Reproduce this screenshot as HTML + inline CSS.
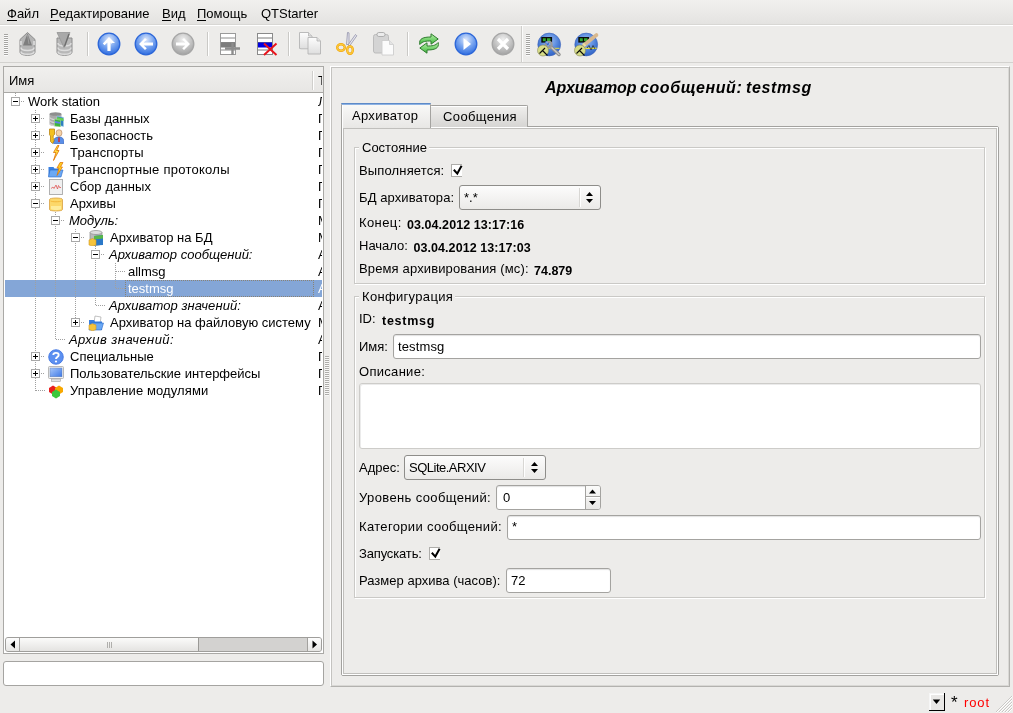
<!DOCTYPE html>
<html><head><meta charset="utf-8">
<style>
*{box-sizing:border-box}
html,body{margin:0;padding:0}
body{width:1013px;height:713px;overflow:hidden;position:relative;background:#edecea;font-family:"Liberation Sans",sans-serif;font-size:13px;line-height:15px;color:#000}
#root{position:absolute;left:0;top:0;width:1013px;height:713px;will-change:transform}
.a{position:absolute}
.t{position:absolute;white-space:nowrap;line-height:15px}
.b{font-weight:bold}
.i{font-style:italic}
u{text-decoration:none;position:relative}
u::after{content:"";position:absolute;left:0;right:0;top:14px;height:1px;background:#000}
.sepv{position:absolute;width:2px;border-left:1px solid #cac9c6;border-right:1px solid #fff}
.grip{position:absolute;width:5px;background:repeating-linear-gradient(#a5a4a1 0 1px,#fbfbfb 1px 2px)}
.exp{position:absolute;width:9px;height:9px;border:1px solid #a8a8a8;background:#fff}
.exp::before{content:"";position:absolute;left:1px;top:3px;width:5px;height:1px;background:#000}
.exp.p::after{content:"";position:absolute;left:3px;top:1px;width:1px;height:5px;background:#000}
.vl{position:absolute;width:1px;background:repeating-linear-gradient(#a0a0a0 0 1px,transparent 1px 2px)}
.hl{position:absolute;height:1px;background:repeating-linear-gradient(90deg,#a0a0a0 0 1px,transparent 1px 2px)}
.ico{position:absolute;width:16px;height:16px}
.tb{position:absolute;width:22px;height:22px;top:33px}
.inp{position:absolute;background:#fff;border:1px solid #a4a3a0;border-radius:3px;box-shadow:inset 0 1px 1px #e2e2e2}
.combo{position:absolute;background:linear-gradient(#fcfcfc,#ebeae8);border:1px solid #8e8d8a;border-radius:3px}
.chk{position:absolute;width:11px;height:13px;border:1px solid #aeadaa;border-right:none;background:#fff}

</style></head><body><div id="root">
<!-- MENU BAR -->
<div class="a" style="left:0;top:0;width:1013px;height:24px;background:linear-gradient(#f1f0ee,#e4e3e1)"></div>
<div class="a" style="left:0;top:24px;width:1013px;height:1px;background:#d8d7d4"></div>
<div class="a" style="left:0;top:25px;width:1013px;height:1px;background:#fff"></div>
<div class="t" style="left:7px;top:6px"><u>Ф</u>айл</div>
<div class="t" style="left:50px;top:6px"><u>Р</u>едактирование</div>
<div class="t" style="left:162px;top:6px"><u>В</u>ид</div>
<div class="t" style="left:197px;top:6px"><u>П</u>омощь</div>
<div class="t" style="left:261px;top:6px">QTStarter</div>
<!-- TOOLBAR -->
<div class="a" style="left:0;top:62px;width:1013px;height:1px;background:#d3d2cf"></div>
<div class="grip" style="left:4px;top:34px;height:22px;width:4px"></div>
<div class="sepv" style="left:87px;top:32px;height:24px"></div>
<div class="sepv" style="left:207px;top:32px;height:24px"></div>
<div class="sepv" style="left:288px;top:32px;height:24px"></div>
<div class="sepv" style="left:407px;top:32px;height:24px"></div>
<div class="a" style="left:521px;top:26px;width:1px;height:36px;background:#cfcecb"></div>
<div class="a" style="left:522px;top:26px;width:1px;height:36px;background:#fbfbfa"></div>
<div class="grip" style="left:526px;top:34px;height:22px;width:4px"></div>
<svg class="a" style="left:0;top:26px" width="620" height="36" viewBox="0 26 620 36">
<defs>
<linearGradient id="gdb" x1="0" x2="1" y1="0" y2="0"><stop offset="0" stop-color="#9a9a9a"/><stop offset=".4" stop-color="#d8d8d8"/><stop offset="1" stop-color="#8c8c8c"/></linearGradient>
<radialGradient id="gblue" cx=".5" cy=".3" r=".7"><stop offset="0" stop-color="#dfe9fb"/><stop offset=".5" stop-color="#7aa6f0"/><stop offset="1" stop-color="#2f6de0"/></radialGradient>
<radialGradient id="ggray" cx=".5" cy=".3" r=".7"><stop offset="0" stop-color="#f0f0f0"/><stop offset=".5" stop-color="#c8c8c8"/><stop offset="1" stop-color="#a2a2a2"/></radialGradient>
<linearGradient id="gdoc" x1="0" x2="0" y1="0" y2="1"><stop offset="0" stop-color="#fdfdfd"/><stop offset="1" stop-color="#dedede"/></linearGradient>
<radialGradient id="gglob" cx=".5" cy=".35" r=".7"><stop offset="0" stop-color="#9fc0f5"/><stop offset=".6" stop-color="#4c7fd8"/><stop offset="1" stop-color="#2a5bbf"/></radialGradient>
</defs>
<!-- icon1 db up -->
<g transform="translate(19.5,32)">
<path d="M8 0.5 L15.5 7.5 L15.5 20 C15.5 22.3 12 23.3 8 23.3 C4 23.3 0.5 22.3 0.5 20 L0.5 7.5 Z" fill="#b4b4b4" stroke="#8c8c8c" stroke-width="1"/>
<path d="M1.5 9 L1.5 13 M14.5 9 L14.5 13" stroke="#d4d4d4" stroke-width="2"/>
<path d="M1.5 15.5 C1.5 17.5 4.5 18.5 8 18.5 C11.5 18.5 14.5 17.5 14.5 15.5 M1.5 19.5 C1.5 21.5 4.5 22.3 8 22.3 C11.5 22.3 14.5 21.5 14.5 19.5" fill="none" stroke="#dedede" stroke-width="1.6"/>
<path d="M8 1.5 L12.5 13.5 L3.5 13.5 Z" fill="#7e7e7e"/>
<path d="M8 3 L9.5 12" stroke="#a0a0a0" stroke-width="1"/>
</g>
<!-- icon2 db down -->
<g transform="translate(56.5,32)">
<path d="M0.5 6 L15.5 6 L15.5 20 C15.5 22.3 12 23.3 8 23.3 C4 23.3 0.5 22.3 0.5 20 Z" fill="#b8b8b8" stroke="#8e8e8e" stroke-width="1"/>
<path d="M1.5 11 C1.5 13 4.5 14 8 14 C11.5 14 14.5 13 14.5 11 M1.5 15.5 C1.5 17.5 4.5 18.5 8 18.5 C11.5 18.5 14.5 17.5 14.5 15.5 M1.5 19.5 C1.5 21.5 4.5 22.3 8 22.3 C11.5 22.3 14.5 21.5 14.5 19.5" fill="none" stroke="#dcdcdc" stroke-width="1.5"/>
<path d="M0.5 0.5 L13.5 0.5 L7.5 15.5 Z" fill="#a9a9a9" stroke="#959595" stroke-width=".8"/>
<path d="M12.5 2 L8 14.5" stroke="#6e6e6e" stroke-width="1.4"/>
</g>
<!-- icon3 blue up -->
<g transform="translate(109,44)">
<circle r="10.8" fill="url(#gblue)" stroke="#2c66d8" stroke-width="1.3"/>
<path d="M0 -7 L6 -1 L3 -1 L3 -0 L1.6 -1.6 L1.6 7 L-1.6 7 L-1.6 -1.6 L-4.5 1.2 L-6.2 -0.6 Z" fill="#fff"/>
</g>
<!-- icon4 blue left -->
<g transform="translate(146,44)">
<circle r="10.8" fill="url(#gblue)" stroke="#2c66d8" stroke-width="1.3"/>
<path d="M-7 0 L-1 -6 L0.8 -4.3 L-2.3 -1.6 L7 -1.6 L7 1.6 L-2.3 1.6 L0.8 4.3 L-1 6 Z" fill="#fff"/>
</g>
<!-- icon5 gray right -->
<g transform="translate(183,44)">
<circle r="10.8" fill="url(#ggray)" stroke="#a6a6a6" stroke-width="1.3"/>
<path d="M7 0 L1 -6 L-0.8 -4.3 L2.3 -1.6 L-7 -1.6 L-7 1.6 L2.3 1.6 L-0.8 4.3 L1 6 Z" fill="#fff"/>
</g>
<!-- icon6 add row -->
<g transform="translate(220,33)">
<rect x=".5" y=".5" width="15" height="21" fill="#fff" stroke="#9a9a9a"/>
<path d="M1 5h14M1 9.5h14M1 17h14" stroke="#8a8a8a" stroke-width="1"/>
<rect x="1" y="9.5" width="14" height="5" fill="#7c7c7c"/>
<path d="M5 15.5h15M12.5 10v12" stroke="#8c8c8c" stroke-width="2.4"/>
</g>
<!-- icon7 delete row -->
<g transform="translate(257,33)">
<rect x=".5" y=".5" width="15" height="21" fill="#fff" stroke="#8a8a8a"/>
<path d="M1 5h14M1 9.5h14M1 17h14" stroke="#7a7a7a" stroke-width="1"/>
<rect x="1" y="9.5" width="14" height="5" fill="#0000e0"/>
<path d="M7 10.5 L19.5 22 M19.5 10.5 L7 22" stroke="#e8141c" stroke-width="2"/>
</g>
<!-- icon8 copy -->
<g transform="translate(299,32)">
<path d="M0.5 0.5 h9 l3.5 3.5 v12.5 h-12.5 z" fill="url(#gdoc)" stroke="#b4b4b4" stroke-width=".9"/>
<path d="M9.5 0.5 v3.5 h3.5" fill="#e0e0e0" stroke="#b4b4b4" stroke-width=".8"/>
<path d="M1.5 17 h12" stroke="#d0d0d0" stroke-width="1"/>
<path d="M9 5.5 h9 l3.5 3.5 v13 h-12.5 z" fill="url(#gdoc)" stroke="#b4b4b4" stroke-width=".9"/>
<path d="M18 5.5 v3.5 h3.5" fill="#e0e0e0" stroke="#b4b4b4" stroke-width=".8"/>
</g>
<!-- icon9 scissors -->
<g transform="translate(336,32)">
<path d="M10.5 12.5 L11.5 0.5 L13 0.8 L13 12.5 Z" fill="#e8e8f0" stroke="#9090a8" stroke-width=".8"/>
<path d="M12 13 L19.5 2.5 L20.8 3.8 L13.5 14 Z" fill="#e8e8f0" stroke="#9090a8" stroke-width=".8"/>
<ellipse cx="5" cy="15.5" rx="3.8" ry="3.3" fill="none" stroke="#f2a810" stroke-width="2.4"/>
<ellipse cx="14" cy="18" rx="2.8" ry="3.8" fill="none" stroke="#f2a810" stroke-width="2.4"/>
<ellipse cx="5" cy="15.5" rx="3.8" ry="3.3" fill="none" stroke="#ffd040" stroke-width="1"/>
<ellipse cx="14" cy="18" rx="2.8" ry="3.8" fill="none" stroke="#ffd040" stroke-width="1"/>
</g>
<!-- icon10 paste -->
<g transform="translate(373,32)">
<rect x="0.5" y="2.5" width="15" height="18.5" rx="2" fill="#d4d4d4" stroke="#b8b8b8" stroke-width=".9"/>
<rect x="4" y="0.5" width="8" height="4" rx="1.8" fill="#ececec" stroke="#a8a8a8" stroke-width=".9"/>
<path d="M9 8.5 h7.5 l4 4 v10.5 h-11.5 z" fill="#fbfbfb" stroke="#cdcdcd" stroke-width=".9"/>
<path d="M16.5 8.5 v4 h4" fill="#e4e4e4" stroke="#cdcdcd" stroke-width=".8"/>
</g>
<!-- icon11 refresh -->
<defs><linearGradient id="ggr" x1="0" y1="0" x2="0" y2="1"><stop offset="0" stop-color="#b8f0a8"/><stop offset="1" stop-color="#3cb83c"/></linearGradient></defs>
<g transform="translate(418,32)">
<path d="M1.8 12.5 C0.5 6.5 5.5 5 13 5 L13 1.8 L20.2 7 L13 12.2 L13 9 C8 9 4.5 9.2 1.8 12.5 Z" fill="url(#ggr)" stroke="#2f7a2f" stroke-width="1"/>
<path d="M20.2 10.5 C21.5 16.5 16.5 18 9 18 L9 21.2 L1.8 16 L9 10.8 L9 14 C14 14 17.5 13.8 20.2 10.5 Z" fill="url(#ggr)" stroke="#2f7a2f" stroke-width="1"/>
</g>
<!-- icon12 play -->
<g transform="translate(466,44)">
<circle r="10.8" fill="url(#gblue)" stroke="#2c66d8" stroke-width="1.3"/>
<path d="M-2.5 -6 L5 0 L-2.5 6 Z" fill="#fff"/>
</g>
<!-- icon13 stop gray -->
<g transform="translate(503,44)">
<circle r="10.8" fill="url(#ggray)" stroke="#a6a6a6" stroke-width="1.3"/>
<path d="M-5 -5 L5 5 M5 -5 L-5 5" stroke="#fff" stroke-width="3.2"/>
</g>
<!-- icon14 -->
<g transform="translate(535,30)">
<circle cx="14.2" cy="14.5" r="11.4" fill="url(#gglob)" stroke="#3a62b8" stroke-width=".6"/>
<rect x="6.3" y="7" width="10.8" height="5.6" fill="#0a0a0a"/>
<path d="M7.8 8.3h3v3h-3z M12 8.3h3.5v3h-3.5z" fill="#2fa82f"/>
<path d="M12 18.3 h12.5" stroke="#e8e040" stroke-width="1"/>
<path d="M15.5 16.5 L24 24.5" stroke="#8a8a8a" stroke-width="3.4" stroke-linecap="round"/>
<path d="M15.5 16.5 L24 24.5" stroke="#c8c8c8" stroke-width="1.6" stroke-linecap="round"/>
<circle cx="13.8" cy="14.6" r="2.9" fill="none" stroke="#9a9a9a" stroke-width="2"/>
<path d="M10.5 11.5 L13.5 14.5" stroke="url(#gglob)" stroke-width="2.2"/>
<circle cx="8" cy="20.5" r="5.5" fill="#d6dc86" stroke="#8a8a60" stroke-width=".6"/>
<path d="M4.5 23.5 L10 18 M7.5 20.5 L12.5 25.5" stroke="#0a0a0a" stroke-width="1.1"/>
</g>
<!-- icon15 -->
<g transform="translate(572,30)">
<circle cx="14.2" cy="14.5" r="11.4" fill="url(#gglob)" stroke="#3a62b8" stroke-width=".6"/>
<rect x="6.3" y="7" width="10.8" height="5.6" fill="#0a0a0a"/>
<path d="M7.8 8.3h3v3h-3z M12 8.3h3.5v3h-3.5z" fill="#2fa82f"/>
<path d="M12 18.3 h12.5" stroke="#e8e040" stroke-width="1.4"/>
<path d="M15 18 L17 15.5 L19 20 L21 15.5 L23 19" fill="none" stroke="#222" stroke-width=".7"/>
<path d="M12 15 L24.5 5" stroke="#d8b88e" stroke-width="3.6" stroke-linecap="round"/>
<path d="M11.5 15.5 L13 14.2" stroke="#e8e0a0" stroke-width="3.6"/>
<circle cx="8" cy="20.5" r="5.5" fill="#d6dc86" stroke="#8a8a60" stroke-width=".6"/>
<path d="M4.5 23.5 L10 18 M7.5 20.5 L12.5 25.5" stroke="#0a0a0a" stroke-width="1.1"/>
</g>
</svg>
<!-- TREE -->
<div class="a" style="left:3px;top:66px;width:321px;height:588px;background:#fff;border:1px solid #aaa9a6"></div>
<div class="a" style="left:4px;top:67px;width:319px;height:25px;background:linear-gradient(#f1f0ee,#e7e6e4)"></div>
<div class="a" style="left:4px;top:92px;width:319px;height:1px;background:#a9a8a5"></div>
<div class="a" style="left:312px;top:71px;width:1px;height:19px;background:#d0cfcc"></div>
<div class="a" style="left:313px;top:71px;width:1px;height:19px;background:#fff"></div>
<div class="t" style="left:9px;top:73px">Имя</div>
<div class="t" style="left:318px;top:73px;width:4px;overflow:hidden">Тип</div>
<div class="a" style="left:4px;top:93px;width:318px;height:544px;overflow:hidden">
<div class="a" style="left:1px;top:187px;width:317px;height:17px;background:#84a6d7"></div>
<div class="a" style="left:121px;top:187px;width:189px;height:17px;border:1px dotted #8a8274"></div>
<div class="vl" style="left:31px;top:17px;width:1px;height:281px;"></div>
<div class="vl" style="left:51px;top:119px;width:1px;height:128px;"></div>
<div class="vl" style="left:71px;top:136px;width:1px;height:94px;"></div>
<div class="vl" style="left:91px;top:153px;width:1px;height:60px;"></div>
<div class="vl" style="left:111px;top:170px;width:1px;height:26px;"></div>
<div class="vl" style="left:11px;top:0px;width:1px;height:4px;"></div>
<div class="hl" style="left:17px;top:8px;width:4px;height:1px;"></div>
<div class="exp" style="left:7px;top:4px;width:9px;height:9px;"></div>
<div class="t" style="left:24px;top:1px;color:#000;">Work station</div>
<div class="t" style="left:314px;top:1px;color:#000">Л</div>
<div class="hl" style="left:37px;top:25px;width:4px;height:1px;"></div>
<div class="exp p" style="left:27px;top:21px;width:9px;height:9px;"></div>
<svg class="ico" style="left:44px;top:18px" viewBox="0 0 16 16">
<path d="M1.5 3 v10 c0 1.3 2.6 2.2 6 2.2 s6-0.9 6-2.2 v-10 z" fill="#a9a9a9"/>
<ellipse cx="7.5" cy="3" rx="6" ry="1.8" fill="#8e8e8e"/>
<path d="M2 6.5c0 1.2 2.5 2 5.5 2M2 9.5c0 1.2 2.5 2 5.5 2M2 12.5c0 1.2 2.5 2 5.5 2" fill="none" stroke="#e6e6e6" stroke-width="1"/>
<path d="M9 5 L15.5 6.5 L15.5 15.5 L9 14 Z" fill="#2f7fc0" stroke="#a8d0e8" stroke-width=".6"/>
<path d="M9 6 L15.5 7.5 L15.5 10 L9 9 Z" fill="#66d050"/>
<path d="M6.5 8 L12.5 9.2 L12.5 16 L6.5 15 Z" fill="#3cb43c" stroke="#b0e0a0" stroke-width=".5"/>
<path d="M7 10 L12 11 L12 12.8 L7 12 Z" fill="#6080e8"/>
</svg>
<div class="t" style="left:66px;top:18px;color:#000;">Базы данных</div>
<div class="t" style="left:314px;top:18px;color:#000">П</div>
<div class="hl" style="left:37px;top:42px;width:4px;height:1px;"></div>
<div class="exp p" style="left:27px;top:38px;width:9px;height:9px;"></div>
<svg class="ico" style="left:44px;top:35px" viewBox="0 0 16 16">
<ellipse cx="11" cy="5" rx="3" ry="3.3" fill="#f4d2a8" stroke="#b08058" stroke-width=".6"/>
<path d="M5.5 15.5 C5.5 10 8 9 11 9 S16 10 16 15.5 Z" fill="#5a8ee8" stroke="#2c5cb8" stroke-width=".6"/>
<path d="M11 9.5 L11 14" stroke="#e02020" stroke-width="1.4"/>
<path d="M1.5 1 h5 v5.5 l-1.3 1.2 v2 l1 1 l-1 1 l1 1 l-1.7 2.8 l-2 -2 v-5.5 l-1 -1.2 z" fill="#f4c020" stroke="#b07800" stroke-width=".7"/>
</svg>
<div class="t" style="left:66px;top:35px;color:#000;">Безопасность</div>
<div class="t" style="left:314px;top:35px;color:#000">П</div>
<div class="hl" style="left:37px;top:59px;width:4px;height:1px;"></div>
<div class="exp p" style="left:27px;top:55px;width:9px;height:9px;"></div>
<svg class="ico" style="left:44px;top:52px" viewBox="0 0 16 16">
<path d="M9.5 0.5 L5.5 7.5 L8 7.5 L5.5 15.5 L11 5.5 L8.6 5.5 L11 0.5 Z" fill="#ffe040" stroke="#e07000" stroke-width=".8"/>
</svg>
<div class="t" style="left:66px;top:52px;color:#000;letter-spacing:0.2px;">Транспорты</div>
<div class="t" style="left:314px;top:52px;color:#000">П</div>
<div class="hl" style="left:37px;top:76px;width:4px;height:1px;"></div>
<div class="exp p" style="left:27px;top:72px;width:9px;height:9px;"></div>
<svg class="ico" style="left:44px;top:69px" viewBox="0 0 16 16">
<path d="M0.5 5 h5 l1 1.5 h6 v8 h-12 z" fill="#3a80e0"/>
<path d="M2 8 h13 l-2 7 h-12.5 z" fill="#6aa8f4" stroke="#2a68c8" stroke-width=".6"/>
<path d="M12 0.5 L9 6 L11 6 L9 13.5 L14.5 5 L12.5 5 L15 0.5 Z" fill="#ffcc20" stroke="#e07000" stroke-width=".7"/>
</svg>
<div class="t" style="left:66px;top:69px;color:#000;letter-spacing:0.27px;">Транспортные протоколы</div>
<div class="t" style="left:314px;top:69px;color:#000">П</div>
<div class="hl" style="left:37px;top:93px;width:4px;height:1px;"></div>
<div class="exp p" style="left:27px;top:89px;width:9px;height:9px;"></div>
<svg class="ico" style="left:44px;top:86px" viewBox="0 0 16 16">
<rect x="1.5" y="0.5" width="13" height="15" fill="#f0f0f0" stroke="#a8a8a8" stroke-width=".9"/>
<path d="M3 9.5 L5 8 L6 9.5 L8 6 L9.5 10 L10.5 6.5 L12 9 L13 8" fill="none" stroke="#e05858" stroke-width=".8"/>
</svg>
<div class="t" style="left:66px;top:86px;color:#000;letter-spacing:0.1px;">Сбор данных</div>
<div class="t" style="left:314px;top:86px;color:#000">П</div>
<div class="hl" style="left:37px;top:110px;width:4px;height:1px;"></div>
<div class="exp" style="left:27px;top:106px;width:9px;height:9px;"></div>
<svg class="ico" style="left:44px;top:103px" viewBox="0 0 16 16">
<path d="M1.5 3.5 C1.5 1.5 14.5 1.5 14.5 3.5 L14.5 13.5 C14.5 15.5 1.5 15.5 1.5 13.5 Z" fill="#fcd86a" stroke="#d8a040" stroke-width=".8"/>
<path d="M2.5 5 C4 6 12 6 13.5 5" fill="none" stroke="#f0b030" stroke-width=".8"/>
<path d="M3 10 L3 13 C5 14.5 11 14.5 13 13 L13 10 Z" fill="#fff5b0" opacity=".7"/>
</svg>
<div class="t" style="left:66px;top:103px;color:#000;">Архивы</div>
<div class="t" style="left:314px;top:103px;color:#000">П</div>
<div class="hl" style="left:57px;top:127px;width:4px;height:1px;"></div>
<div class="exp" style="left:47px;top:123px;width:9px;height:9px;"></div>
<div class="t" style="left:65px;top:120px;color:#000;font-style:italic;">Модуль:</div>
<div class="t" style="left:314px;top:120px;color:#000">М</div>
<div class="hl" style="left:77px;top:144px;width:4px;height:1px;"></div>
<div class="exp" style="left:67px;top:140px;width:9px;height:9px;"></div>
<svg class="ico" style="left:84px;top:137px" viewBox="0 0 16 16">
<path d="M2 2.5v10c0 1.6 2.6 2.8 6 2.8s6-1.2 6-2.8v-10z" fill="#b9b9b9" stroke="#8c8c8c" stroke-width=".7"/>
<ellipse cx="8" cy="2.5" rx="6" ry="2" fill="#dedede" stroke="#8c8c8c" stroke-width=".7"/>
<path d="M6 6 L15 5 L15 15 L6 15.5 Z" fill="#2a78c8"/>
<path d="M6 6 L15 5 L15 8.5 L6 9.5 Z" fill="#58b848"/>
<path d="M1 10 L4.5 8.5 L8 10 L8 15 L4.5 16 L1 15 Z" fill="#f6c43c" stroke="#d49a20" stroke-width=".6"/>
</svg>
<div class="t" style="left:106px;top:137px;color:#000;">Архиватор на БД</div>
<div class="t" style="left:314px;top:137px;color:#000">М</div>
<div class="hl" style="left:97px;top:161px;width:4px;height:1px;"></div>
<div class="exp" style="left:87px;top:157px;width:9px;height:9px;"></div>
<div class="t" style="left:105px;top:154px;color:#000;font-style:italic;">Архиватор сообщений:</div>
<div class="t" style="left:314px;top:154px;color:#000">А</div>
<div class="hl" style="left:112px;top:178px;width:10px;height:1px;"></div>
<div class="t" style="left:124px;top:171px;color:#000;">allmsg</div>
<div class="t" style="left:314px;top:171px;color:#000">А</div>
<div class="hl" style="left:112px;top:195px;width:10px;height:1px;"></div>
<div class="t" style="left:124px;top:188px;color:#fff;">testmsg</div>
<div class="t" style="left:314px;top:188px;color:#fff">А</div>
<div class="hl" style="left:92px;top:212px;width:10px;height:1px;"></div>
<div class="t" style="left:105px;top:205px;color:#000;font-style:italic;letter-spacing:0.08px;">Архиватор значений:</div>
<div class="t" style="left:314px;top:205px;color:#000">А</div>
<div class="hl" style="left:77px;top:229px;width:4px;height:1px;"></div>
<div class="exp p" style="left:67px;top:225px;width:9px;height:9px;"></div>
<svg class="ico" style="left:84px;top:222px" viewBox="0 0 16 16">
<path d="M7 1 L13 2 L12 9 L6 8 Z" fill="#fff" stroke="#999" stroke-width=".6"/>
<path d="M1 5 h5 l1 1.5 h7 v8.5 h-13 z" fill="#3a80e0"/>
<path d="M3 8 h12.5 l-2 7 h-12.5 z" fill="#6aa8f4" stroke="#2a68c8" stroke-width=".6"/>
<path d="M1 10 L4.5 8.8 L8 10 L8 14.5 L4.5 15.8 L1 14.5 Z" fill="#f6c43c" stroke="#d49a20" stroke-width=".6"/>
</svg>
<div class="t" style="left:106px;top:222px;color:#000;">Архиватор на файловую систему</div>
<div class="t" style="left:314px;top:222px;color:#000">М</div>
<div class="hl" style="left:52px;top:246px;width:10px;height:1px;"></div>
<div class="t" style="left:65px;top:239px;color:#000;font-style:italic;letter-spacing:0.45px;">Архив значений:</div>
<div class="t" style="left:314px;top:239px;color:#000">А</div>
<div class="hl" style="left:37px;top:263px;width:4px;height:1px;"></div>
<div class="exp p" style="left:27px;top:259px;width:9px;height:9px;"></div>
<svg class="ico" style="left:44px;top:256px" viewBox="0 0 16 16">
<circle cx="8" cy="8" r="7.3" fill="#5c90f0" stroke="#3a70e0" stroke-width=".8"/>
<path d="M5.3 6 C5.3 3.2 10.7 3.2 10.7 6 C10.7 8 8 8 8 10" fill="none" stroke="#fff" stroke-width="1.9"/>
<circle cx="8" cy="12.5" r="1.1" fill="#fff"/>
</svg>
<div class="t" style="left:66px;top:256px;color:#000;">Специальные</div>
<div class="t" style="left:314px;top:256px;color:#000">П</div>
<div class="hl" style="left:37px;top:280px;width:4px;height:1px;"></div>
<div class="exp p" style="left:27px;top:276px;width:9px;height:9px;"></div>
<svg class="ico" style="left:44px;top:273px" viewBox="0 0 16 16">
<defs><linearGradient id="gmon" x1="0" y1="0" x2="1" y2="1"><stop offset="0" stop-color="#a8c8fa"/><stop offset="1" stop-color="#3d78e6"/></linearGradient></defs>
<rect x="0.5" y="0.5" width="15" height="12" rx="1" fill="#f2f2f2" stroke="#a8a8a8" stroke-width=".8"/>
<rect x="2" y="2" width="12" height="8.8" fill="url(#gmon)" stroke="#5a7ab0" stroke-width=".4"/>
<rect x="3.5" y="13" width="9" height="2.5" fill="#e4e4e4" stroke="#a0a0a0" stroke-width=".6"/>
</svg>
<div class="t" style="left:66px;top:273px;color:#000;">Пользовательские интерфейсы</div>
<div class="t" style="left:314px;top:273px;color:#000">П</div>
<div class="hl" style="left:32px;top:297px;width:10px;height:1px;"></div>
<svg class="ico" style="left:44px;top:290px" viewBox="0 0 16 16">
<path d="M1 5 L5 2.5 L9 5 L9 9 L5 11.5 L1 9 Z" fill="#e82020"/>
<path d="M7 5 L11 2.5 L15 5 L15 9 L11 11.5 L7 9 Z" fill="#f8a800"/>
<path d="M4 9 L8 6.5 L12 9 L12 13 L8 15.5 L4 13 Z" fill="#3cc83c"/>
</svg>
<div class="t" style="left:66px;top:290px;color:#000;letter-spacing:0.1px;">Управление модулями</div>
<div class="t" style="left:314px;top:290px;color:#000">П</div>
</div>
<div class="a" style="left:5px;top:637px;width:317px;height:15px;border:1px solid #9f9e9b;border-radius:3px;background:#d3d2d0;overflow:hidden">
<div class="a" style="left:0;top:0;width:14px;height:13px;background:linear-gradient(#fdfdfd,#e6e5e3);border-right:1px solid #a3a29f"></div>
<div class="a" style="left:14px;top:0;width:179px;height:13px;background:linear-gradient(#fbfbfa,#e4e3e1);border-right:1px solid #9a9996"></div>
<div class="a" style="left:301px;top:0;width:15px;height:13px;background:linear-gradient(#fdfdfd,#e6e5e3);border-left:1px solid #a3a29f"></div>
<div class="a" style="left:101px;top:4px;width:1px;height:6px;background:#b0afac;box-shadow:2px 0 0 #b0afac,4px 0 0 #b0afac"></div>
</div>
<svg class="a" style="left:9px;top:640px" width="8" height="9"><path d="M6 0.5 L6 8.5 L1.5 4.5 Z" fill="#000"/></svg>
<svg class="a" style="left:311px;top:640px" width="8" height="9"><path d="M1.5 0.5 L1.5 8.5 L6 4.5 Z" fill="#000"/></svg>
<div class="a" style="left:3px;top:661px;width:321px;height:25px;background:#fff;border:1px solid #a5a4a1;border-radius:3px"></div>
<!-- SPLITTER GRIP -->
<div class="grip" style="left:325px;top:356px;width:4px;height:40px;background:repeating-linear-gradient(#aeadaa 0 1px,#f8f8f7 1px 2px)"></div>
<!-- RIGHT PANEL FRAME -->
<div class="a" style="left:330px;top:66px;width:680px;height:621px;border-style:solid;border-width:1px;border-color:#fff #b3b2af #b3b2af #fff"></div>
<div class="a" style="left:331px;top:67px;width:678px;height:619px;border-style:solid;border-width:1px;border-color:#c4c3c0 #d9d8d5 #d9d8d5 #c4c3c0"></div>
<div class="t b i" style="left:545px;top:79px;font-size:16px;line-height:18px">Архиватор</div>
<div class="t b i" style="left:640px;top:79px;font-size:16px;line-height:18px;letter-spacing:0.6px">сообщений:</div>
<div class="t b i" style="letter-spacing:0.65px;left:746px;top:79px;font-size:16px;line-height:18px;">testmsg</div>
<!-- TAB PANE -->
<div class="a" style="left:341px;top:126px;width:658px;height:550px;border:1px solid #a3a29f;border-radius:2px"></div>
<div class="a" style="left:342px;top:127px;width:656px;height:548px;border:1px solid #fff"></div>
<div class="a" style="left:343px;top:128px;width:654px;height:546px;border:1px solid #c0bfbc"></div>
<!-- TABS -->
<div class="a" style="left:430px;top:105px;width:98px;height:22px;border:1px solid #a3a29f;border-bottom:none;border-radius:2px 2px 0 0;background:linear-gradient(#f0efed,#d6d5d3)"></div>
<div class="a" style="left:431px;top:106px;width:96px;height:1px;background:#fff"></div>
<div class="a" style="left:341px;top:103px;width:90px;height:25px;border:1px solid #a4a3a0;border-top:none;border-bottom:none;border-radius:2px 2px 0 0;background:linear-gradient(#fafaf9,#e8e7e5)"></div>
<div class="a" style="left:341px;top:103px;width:90px;height:1px;background:#5d8ac8;border-radius:2px 2px 0 0"></div>
<div class="a" style="left:342px;top:104px;width:88px;height:1px;background:#8db2e3"></div>
<div class="a" style="left:342px;top:105px;width:1px;height:23px;background:#fff"></div>
<div class="t" style="letter-spacing:0.3px;left:352px;top:108px">Архиватор</div>
<div class="t" style="letter-spacing:0.38px;left:443px;top:109px">Сообщения</div>

<!-- GROUP: Состояние -->
<div class="a" style="left:354px;top:147px;width:631px;height:137px;border:1px solid #cac9c6;box-shadow:1px 1px 0 #fff"></div>
<div class="a" style="left:355px;top:148px;width:629px;height:1px;background:#fff"></div>
<div class="a" style="left:355px;top:148px;width:1px;height:135px;background:#fff"></div>
<div class="a" style="left:359px;top:140px;width:70px;height:15px;background:#edecea"></div>
<div class="t" style="left:362px;top:140px">Состояние</div>
<div class="t" style="letter-spacing:0.15px;left:359px;top:163px">Выполняется:</div>
<div class="chk" style="left:451px;top:164px"></div>
<svg class="a" style="left:451px;top:164px" width="13" height="13"><path d="M2.8 5.8 L6.3 9.6 L10.6 1.8" fill="none" stroke="#000" stroke-width="2"/></svg>
<div class="t" style="letter-spacing:0.1px;left:359px;top:190px">БД архиватора:</div>
<div class="combo" style="left:459px;top:185px;width:142px;height:25px"></div>
<div class="a" style="left:579px;top:188px;width:1px;height:19px;background:#d8d7d4"></div>
<div class="a" style="left:580px;top:188px;width:1px;height:19px;background:#fff"></div>
<svg class="a" style="left:585px;top:191px" width="10" height="14"><path d="M1 5 L4.5 1 L8 5 Z M1 8 L4.5 12 L8 8 Z" fill="#000"/></svg>
<div class="t" style="left:464px;top:190px">*.*</div>
<div class="t" style="left:359px;top:215px;letter-spacing:0.4px">Конец:</div>
<div class="t b" style="letter-spacing:0.06px;left:407px;top:218px;font-size:12.5px">03.04.2012 13:17:16</div>
<div class="t" style="left:359px;top:238px">Начало:</div>
<div class="t b" style="letter-spacing:0.06px;left:413.5px;top:241px;font-size:12.5px">03.04.2012 13:17:03</div>
<div class="t" style="letter-spacing:0.137px;left:359px;top:261px">Время архивирования (мс):</div>
<div class="t b" style="left:534px;top:264px;font-size:12.5px">74.879</div>

<!-- GROUP: Конфигурация -->
<div class="a" style="left:354px;top:296px;width:631px;height:302px;border:1px solid #cac9c6;box-shadow:1px 1px 0 #fff"></div>
<div class="a" style="left:355px;top:297px;width:629px;height:1px;background:#fff"></div>
<div class="a" style="left:355px;top:297px;width:1px;height:300px;background:#fff"></div>
<div class="a" style="left:359px;top:289px;width:96px;height:15px;background:#edecea"></div>
<div class="t" style="letter-spacing:0.32px;left:362px;top:289px">Конфигурация</div>
<div class="t" style="left:359px;top:311px">ID:</div>
<div class="t b" style="left:382px;top:314px;font-size:12.5px;letter-spacing:0.75px">testmsg</div>
<div class="t" style="left:359px;top:339px">Имя:</div>
<div class="inp" style="left:393px;top:334px;width:588px;height:25px"></div>
<div class="t" style="letter-spacing:0.12px;left:398px;top:339px">testmsg</div>
<div class="t" style="letter-spacing:0.3px;left:359px;top:364px">Описание:</div>
<div class="a" style="left:359px;top:383px;width:622px;height:66px;background:#fff;border:1px solid #cdccc9;border-radius:3px;box-shadow:inset 1px 1px 0 #ebebeb"></div>
<div class="t" style="left:359px;top:460px">Адрес:</div>
<div class="combo" style="left:404px;top:455px;width:142px;height:25px"></div>
<div class="a" style="left:523px;top:458px;width:1px;height:19px;background:#d8d7d4"></div>
<div class="a" style="left:524px;top:458px;width:1px;height:19px;background:#fff"></div>
<svg class="a" style="left:530px;top:461px" width="10" height="14"><path d="M1 5 L4.5 1 L8 5 Z M1 8 L4.5 12 L8 8 Z" fill="#000"/></svg>
<div class="t" style="letter-spacing:-0.5px;left:409px;top:460px">SQLite.ARXIV</div>
<div class="t" style="letter-spacing:0.372px;left:359px;top:490px">Уровень сообщений:</div>
<div class="inp" style="left:496px;top:485px;width:105px;height:25px"></div>
<div class="a" style="left:585px;top:486px;width:15px;height:23px;background:linear-gradient(#fbfbfa,#e8e7e5);border-left:1px solid #a3a29f;border-radius:0 2px 2px 0"></div>
<div class="a" style="left:586px;top:496px;width:14px;height:1px;background:#a3a29f"></div>
<div class="a" style="left:586px;top:497px;width:14px;height:1px;background:#fff"></div>
<svg class="a" style="left:588px;top:488px" width="10" height="20"><path d="M1 5.5 L4.5 1.5 L8 5.5 Z M1 13 L4.5 17 L8 13 Z" fill="#000"/></svg>
<div class="t" style="left:503px;top:490px">0</div>
<div class="t" style="letter-spacing:0.335px;left:359px;top:519px">Категории сообщений:</div>
<div class="inp" style="left:507px;top:515px;width:474px;height:25px"></div>
<div class="t" style="left:512px;top:519px">*</div>
<div class="t" style="letter-spacing:-0.152px;left:359px;top:546px">Запускать:</div>
<div class="chk" style="left:429px;top:547px"></div>
<svg class="a" style="left:429px;top:547px" width="13" height="13"><path d="M2.8 5.8 L6.3 9.6 L10.6 1.8" fill="none" stroke="#000" stroke-width="2"/></svg>
<div class="t" style="letter-spacing:0.017px;left:359px;top:573px">Размер архива (часов):</div>
<div class="inp" style="left:506px;top:568px;width:105px;height:25px"></div>
<div class="t" style="left:511px;top:573px">72</div>
<!-- STATUS BAR -->
<div class="a" style="left:929px;top:693px;width:16px;height:18px;background:#e9e8e6;border-right:1px solid #000;border-bottom:1px solid #000;box-shadow:inset 1px 1px 0 #f6f6f6,inset 2px 2px 0 #fff"></div>
<svg class="a" style="left:932px;top:699px" width="10" height="6"><path d="M0.8 0.5 L8.2 0.5 L4.5 5 Z" fill="#000"/></svg>
<div class="t" style="left:951px;top:694px;font-size:17px;line-height:18px">*</div>
<div class="t" style="left:964px;top:695px;color:#f00;letter-spacing:0.9px">root</div>
<svg class="a" style="left:995px;top:695px" width="18" height="18"><path d="M17 4 L4 17 M17 7 L7 17 M17 10 L10 17 M17 13 L13 17 M17 1 L1 17" stroke="#c9c8c5" stroke-width="1"/><path d="M17.5 4.5 L4.5 17.5 M17.5 7.5 L7.5 17.5 M17.5 10.5 L10.5 17.5 M17.5 13.5 L13.5 17.5 M17.5 1.5 L1.5 17.5" stroke="#fff" stroke-width="1"/></svg>

</div></body></html>
